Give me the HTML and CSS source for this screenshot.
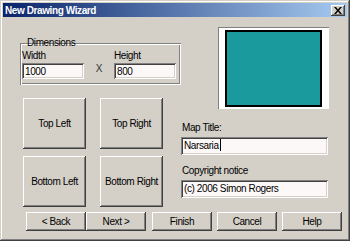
FILE: index.html
```html
<!DOCTYPE html>
<html lang="en">

<head>
    <meta charset="UTF-8" />
    <title>New Drawing Wizard</title>
    <link rel="stylesheet" href="styles.css">
</head>

<body>

    <div class="window">
        <!-- Title bar -->
        <div class="titlebar">
            <span class="title">New Drawing Wizard</span>
            <button class="close">
                <svg width="8" height="7" viewBox="0 0 8 7">
                    <path d="M0 0h2l2 2.5l2-2.5h2l-3 3.5l3 3.5h-2l-2-2.5l-2 2.5h-2l3-3.5z" fill="#000" />
                </svg>
            </button>
        </div>

        <div class="content">
            <div class="main">
                <!-- Left side -->
                <div class="left">
                    <fieldset class="group">
                        <legend>Dimensions</legend>
                        <div class="dims">
                            <div class="field">
                                <label>Width</label>
                                <div class="input small">1000</div>
                            </div>
                            <span class="times">X</span>
                            <div class="field">
                                <label>Height</label>
                                <div class="input small">800</div>
                            </div>
                        </div>
                    </fieldset>

                    <div class="corners">
                        <button class="btn big">Top Left</button>
                        <button class="btn big">Top Right</button>
                        <button class="btn big">Bottom Left</button>
                        <button class="btn big">Bottom Right</button>
                    </div>
                </div>

                <!-- Right side -->
                <div class="right">
                    <div class="preview">
                        <div class="map"></div>
                    </div>
                    <label class="lbl first">Map Title:</label>
                    <div class="input wide">Narsaria<span class="caret"></span></div>
                    <label class="lbl">Copyright notice</label>
                    <div class="input wide">(c) 2006 Simon Rogers</div>
                </div>
            </div>

            <!-- Bottom buttons -->
            <div class="actions">
                <button class="btn">&lt; Back</button>
                <button class="btn">Next &gt;</button>
                <button class="btn gap">Finish</button>
                <button class="btn">Cancel</button>
                <button class="btn">Help</button>
            </div>
        </div>
    </div>

</body>

</html>
```

FILE: styles.css
```css
* {
    box-sizing: border-box;
}

body {
    margin: 0;
    font-family: 'Liberation Sans', Arial, sans-serif;
    font-size: 10px;
    letter-spacing: -0.4px;
    color: #000;
}

.window {
    width: 350px;
    height: 241px;
    background: #d4d0c8;
    padding: 3px;
    box-shadow: inset -1px -1px #404040, inset 1px 1px #d4d0c8, inset -2px -2px #808080, inset 2px 2px #fff;
}

.titlebar {
    height: 14px;
    display: flex;
    align-items: center;
    justify-content: space-between;
    padding: 0 2px 0 2px;
    background: linear-gradient(to right, #0a246a, #a6caf0);
}

.title {
    color: #fff;
    font-weight: bold;
    font-size: 10px;
}

.close {
    width: 14px;
    height: 11px;
    padding: 0;
    border: none;
    background: #d4d0c8;
    display: flex;
    align-items: center;
    justify-content: center;
    box-shadow: inset -1px -1px #404040, inset 1px 1px #fff, inset -2px -2px #808080;
}

.content {
    padding: 10px 0 0 17px;
}

.main {
    display: flex;
}

.left {
    width: 161px;
}

.group {
    margin: 9px 0 0 0;
    padding: 0 0 6px 2px;
    border: none;
    box-shadow: inset 1px 1px #808080, inset -1px -1px #fff, inset 2px 2px #fff, inset -2px -2px #808080;
}

.group legend {
    padding: 0 1px;
    margin-left: 4px;
    line-height: 13px;
}

.dims {
    display: flex;
    align-items: flex-end;
}

.field label {
    display: block;
    line-height: 13px;
    margin-bottom: 1px;
}

.times {
    width: 30px;
    text-align: center;
    line-height: 16px;
    padding-bottom: 2px;
    color: #333;
}

.input {
    background: #fdf8f8;
    padding: 2px 3px;
    line-height: 13px;
    white-space: nowrap;
    box-shadow: inset 1px 1px #808080, inset -1px -1px #fff, inset 2px 2px #404040, inset -2px -2px #d4d0c8;
}

.small {
    width: 62px;
    height: 16px;
    padding-top: 2px;
}

.wide {
    width: 147px;
    height: 18px;
}

.caret {
    display: inline-block;
    width: 1px;
    height: 12px;
    background: #000;
    vertical-align: -2px;
    margin-left: 1px;
}

.corners {
    display: grid;
    grid-template-columns: 63px 63px;
    grid-auto-rows: 51px;
    column-gap: 14px;
    row-gap: 7px;
    margin: 13px 0 0 3px;
}

.btn {
    font-family: inherit;
    font-size: 10px;
    letter-spacing: -0.4px;
    color: #000;
    background: #d4d0c8;
    border: none;
    padding: 0;
    white-space: nowrap;
    box-shadow: inset -1px -1px #404040, inset 1px 1px #fff, inset -2px -2px #808080, inset 2px 2px #d4d0c8;
}

.right {
    display: flex;
    flex-direction: column;
}

.preview {
    width: 111px;
    height: 82px;
    margin-left: 37px;
    background: #fff;
    display: flex;
    align-items: center;
    justify-content: center;
    box-shadow: inset 1px 1px #808080, inset -1px -1px #fff;
}

.map {
    width: 97px;
    height: 77px;
    background: #1a9a9c;
    border: 2px solid #000;
}

.lbl {
    line-height: 13px;
    margin: 9px 0 3px 1px;
}

.lbl.first {
    margin-top: 12px;
}

.actions {
    display: flex;
    margin: 5px 0 0 6px;
}

.actions .btn {
    width: 61px;
    height: 19px;
    margin-right: 5px;
}

.actions .btn:first-child {
    margin-right: 0;
}

.actions .gap {
    margin-left: 1px;
}
```
